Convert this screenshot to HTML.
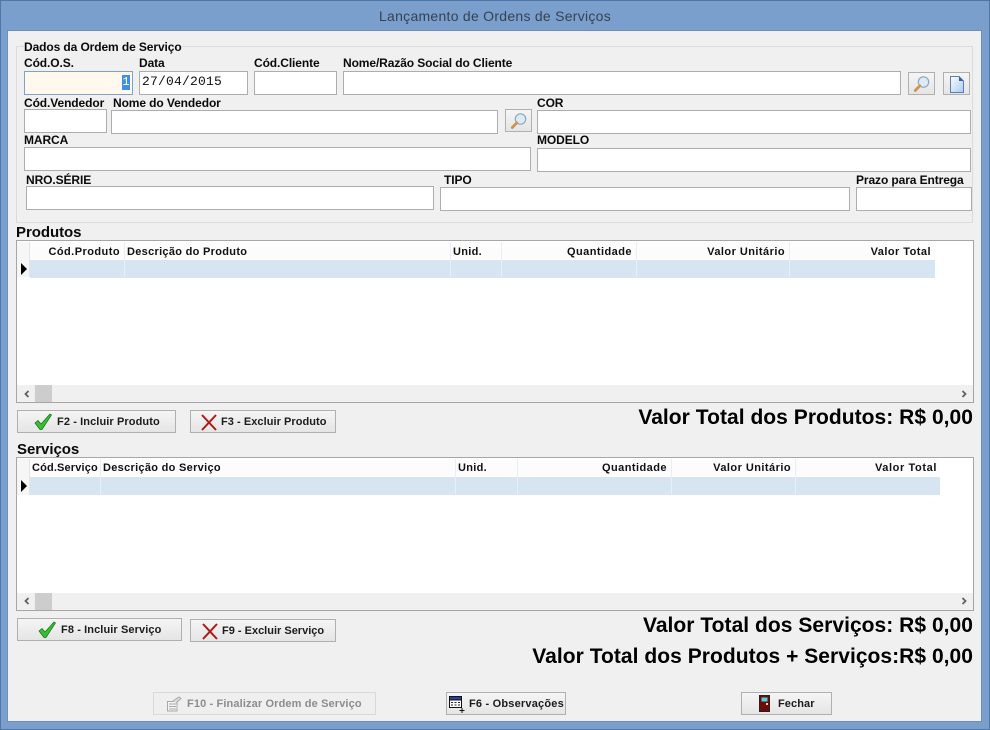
<!DOCTYPE html>
<html><head><meta charset="utf-8"><title>Lançamento de Ordens de Serviços</title>
<style>
html,body{margin:0;padding:0;background:#7a9fcd;}
#w{position:relative;width:990px;height:730px;overflow:hidden;background:#7a9fcd;font-family:"Liberation Sans",sans-serif;color:#000;}
#w *{position:absolute;box-sizing:border-box;}
.o{left:0;top:0;width:990px;height:730px;border:1px solid #4e77a6;}
.c{left:7px;top:30px;width:975px;height:692px;background:#f0f0f0;border:1px solid #6b90bf;}
.t{left:0;width:990px;top:7px;text-align:center;font-size:14px;letter-spacing:.27px;line-height:18px;color:#37414f;}
.g{left:16px;top:46px;width:957px;height:177px;border:1px solid #dcdcdc;}
.l{font-size:12px;font-weight:bold;line-height:14px;white-space:nowrap;color:#0a0a0a;letter-spacing:-.1px;}
.i{background:#fff;border:1px solid #adadad;}
.b{background:linear-gradient(#f5f5f5,#e5e5e5);border:1px solid #b0b0b0;}
.bt{font-size:11px;font-weight:bold;line-height:14px;white-space:nowrap;letter-spacing:.08px;color:#1c1c1c;}
.grid{left:16px;width:958px;background:#fff;border:1px solid #a6a6a6;}
.hd{font-family:"Liberation Sans",sans-serif;font-size:11px;font-weight:bold;line-height:14px;white-space:nowrap;letter-spacing:.3px;color:#111;}
.r{text-align:right;letter-spacing:.45px;}
.tot{right:17px;font-size:21px;font-weight:bold;line-height:24px;white-space:nowrap;color:#000;text-align:right;letter-spacing:.04px;}
.h2{font-size:15px;font-weight:bold;line-height:16px;color:#0a0a0a;letter-spacing:-.05px;}
</style></head><body><div id="w">
<div class="o"></div>
<div class="t">Lançamento de Ordens de Serviços</div>
<div class="c"></div>
<div class="g"></div>
<div class="l" style="left:24px;top:40px;background:#f0f0f0;">Dados da Ordem de Serviço</div>

<div class="l" style="left:24px;top:56px">Cód.O.S.</div>
<div class="l" style="left:139px;top:56px">Data</div>
<div class="l" style="left:254px;top:56px">Cód.Cliente</div>
<div class="l" style="left:343px;top:56px">Nome/Razão Social do Cliente</div>

<div class="i" style="left:24px;top:71px;width:109px;height:24px;border-color:#7da2ce;background:#fff8ec"></div>
<div style="left:122px;top:75px;width:8px;height:15px;background:#3f8fe6;color:#fff;font:12px/15px 'Liberation Mono',monospace;text-align:center">1</div>
<div class="i" style="left:139px;top:71px;width:109px;height:24px;"></div>
<div style="left:142px;top:74px;font:13px/16px 'Liberation Mono',monospace;color:#111;letter-spacing:.2px;white-space:nowrap">27/04/2015</div>
<div class="i" style="left:254px;top:71px;width:83px;height:24px"></div>
<div class="i" style="left:343px;top:71px;width:558px;height:24px"></div>

<div class="b" style="left:908px;top:72px;width:27px;height:23px"></div>
<svg style="left:913px;top:75px" width="18" height="18" viewBox="0 0 18 18"><circle cx="10.500" cy="7" r="5.200" fill="#dcebf6" stroke="#8aa9c0" stroke-width="1.200"/><path d="M6.800 10.800L2.300 15.500" stroke="#cf9350" stroke-width="2.800" stroke-linecap="round"/></svg>
<div class="b" style="left:943px;top:72px;width:27px;height:23px"></div>
<svg style="left:950px;top:76px" width="15" height="17" viewBox="0 0 15 17"><defs><linearGradient id="d" x1="0" y1="0" x2="1" y2="1"><stop offset="0" stop-color="#fff"/><stop offset="1" stop-color="#a9c9ee"/></linearGradient></defs><path d="M.5.5H9L13.5 5V16.5H.5Z" fill="url(#d)" stroke="#5a7fb5"/><path d="M9 .5V5H13.5Z" fill="#3b5f9c"/></svg>

<div class="l" style="left:24px;top:96px">Cód.Vendedor</div>
<div class="l" style="left:113px;top:96px">Nome do Vendedor</div>
<div class="l" style="left:537px;top:96px">COR</div>
<div class="i" style="left:24px;top:109px;width:83px;height:24px"></div>
<div class="i" style="left:111px;top:110px;width:387px;height:24px"></div>
<div class="b" style="left:505px;top:109px;width:27px;height:23px"></div>
<svg style="left:510px;top:112px" width="18" height="18" viewBox="0 0 18 18"><circle cx="10.500" cy="7" r="5.200" fill="#dcebf6" stroke="#8aa9c0" stroke-width="1.200"/><path d="M6.800 10.800L2.300 15.500" stroke="#cf9350" stroke-width="2.800" stroke-linecap="round"/></svg>
<div class="i" style="left:537px;top:110px;width:434px;height:24px"></div>

<div class="l" style="left:24px;top:133px">MARCA</div>
<div class="l" style="left:537px;top:133px">MODELO</div>
<div class="i" style="left:24px;top:147px;width:507px;height:24px"></div>
<div class="i" style="left:537px;top:148px;width:434px;height:24px"></div>

<div class="l" style="left:26px;top:173px">NRO.SÉRIE</div>
<div class="l" style="left:444px;top:173px">TIPO</div>
<div class="l" style="left:856px;top:173px">Prazo para Entrega</div>
<div class="i" style="left:26px;top:186px;width:408px;height:24px"></div>
<div class="i" style="left:440px;top:187px;width:410px;height:24px"></div>
<div class="i" style="left:856px;top:187px;width:116px;height:24px"></div>

<div class="h2" style="left:16px;top:225px">Produtos</div>
<div class="grid" style="top:240px;height:163px"></div>
<div style="left:17px;top:242px;width:918px;height:17px;background:#fcfcfc"></div>
<div style="left:30px;top:260px;width:905px;height:18px;background:#d7e4f1"></div>
<div style="left:17px;top:242px;width:13px;height:35px;background:#f6f6f6"></div>
<div style="left:29px;top:242px;width:1px;height:35px;background:#e4e4e4"></div>
<div style="left:124px;top:242px;width:1px;height:35px;background:#e8eef5"></div>
<div style="left:450px;top:242px;width:1px;height:35px;background:#e8eef5"></div>
<div style="left:501px;top:242px;width:1px;height:35px;background:#e8eef5"></div>
<div style="left:636px;top:242px;width:1px;height:35px;background:#e8eef5"></div>
<div style="left:789px;top:242px;width:1px;height:35px;background:#e8eef5"></div>
<div style="left:21px;top:263px;width:0;height:0;border-left:6px solid #000;border-top:6px solid transparent;border-bottom:6px solid transparent"></div>
<div class="hd r" style="left:30px;width:90px;top:245px">Cód.Produto</div>
<div class="hd" style="left:127px;top:245px">Descrição do Produto</div>
<div class="hd" style="left:453px;top:245px">Unid.</div>
<div class="hd r" style="left:502px;width:130px;top:245px">Quantidade</div>
<div class="hd r" style="left:637px;width:148px;top:245px">Valor Unitário</div>
<div class="hd r" style="left:790px;width:141px;top:245px">Valor Total</div>
<div style="left:17px;top:385px;width:956px;height:17px;background:#f0f0f0"></div>
<div style="left:35px;top:385px;width:17px;height:17px;background:#cdcdcd"></div>
<svg style="left:23px;top:390px" width="8" height="8" viewBox="0 0 8 8"><path d="M5.5 1L2.5 4L5.5 7" fill="none" stroke="#606060" stroke-width="1.8"/></svg>
<svg style="left:960px;top:390px" width="8" height="8" viewBox="0 0 8 8"><path d="M2.5 1L5.5 4L2.5 7" fill="none" stroke="#606060" stroke-width="1.8"/></svg>

<div class="b" style="left:17px;top:410px;width:159px;height:23px"></div>
<svg style="left:34px;top:413px" width="18" height="17" viewBox="0 0 18 17"><path d="M1 10L4 7.500L7 11L16 1L17.500 2L8 16.500H6Z" fill="#35c035" stroke="#1a6b1a" stroke-width=".7"/></svg>
<div class="bt" style="left:57px;top:415px;letter-spacing:.1px">F2 - Incluir Produto</div>
<div class="b" style="left:190px;top:410px;width:146px;height:23px"></div>
<svg style="left:200px;top:414px" width="18" height="17" viewBox="0 0 18 17"><path d="M2 1L16 16M16 1L2 16" stroke="#b01818" stroke-width="2"/></svg>
<div class="bt" style="left:221px;top:415px;letter-spacing:.05px">F3 - Excluir Produto</div>
<div class="tot" style="top:406px">Valor Total dos Produtos: R$ 0,00</div>

<div class="h2" style="left:17px;top:442px">Serviços</div>
<div class="grid" style="top:457px;height:154px"></div>
<div style="left:17px;top:459px;width:923px;height:17px;background:#fcfcfc"></div>
<div style="left:30px;top:477px;width:910px;height:18px;background:#d7e4f1"></div>
<div style="left:17px;top:459px;width:13px;height:36px;background:#f6f6f6"></div>
<div style="left:29px;top:459px;width:1px;height:36px;background:#e4e4e4"></div>
<div style="left:100px;top:459px;width:1px;height:36px;background:#e8eef5"></div>
<div style="left:455px;top:459px;width:1px;height:36px;background:#e8eef5"></div>
<div style="left:517px;top:459px;width:1px;height:36px;background:#e8eef5"></div>
<div style="left:671px;top:459px;width:1px;height:36px;background:#e8eef5"></div>
<div style="left:795px;top:459px;width:1px;height:36px;background:#e8eef5"></div>
<div style="left:21px;top:480px;width:0;height:0;border-left:6px solid #000;border-top:6px solid transparent;border-bottom:6px solid transparent"></div>
<div class="hd" style="left:32px;top:461px;letter-spacing:.15px">Cód.Serviço</div>
<div class="hd" style="left:103px;top:461px">Descrição do Serviço</div>
<div class="hd" style="left:458px;top:461px">Unid.</div>
<div class="hd r" style="left:518px;width:149px;top:461px">Quantidade</div>
<div class="hd r" style="left:672px;width:119px;top:461px">Valor Unitário</div>
<div class="hd r" style="left:796px;width:141px;top:461px;letter-spacing:.6px">Valor Total</div>
<div style="left:17px;top:593px;width:956px;height:17px;background:#f0f0f0"></div>
<div style="left:35px;top:593px;width:17px;height:17px;background:#cdcdcd"></div>
<svg style="left:23px;top:597px" width="8" height="8" viewBox="0 0 8 8"><path d="M5.5 1L2.5 4L5.5 7" fill="none" stroke="#606060" stroke-width="1.8"/></svg>
<svg style="left:960px;top:597px" width="8" height="8" viewBox="0 0 8 8"><path d="M2.5 1L5.5 4L2.5 7" fill="none" stroke="#606060" stroke-width="1.8"/></svg>

<div class="b" style="left:17px;top:618px;width:165px;height:23px"></div>
<svg style="left:38px;top:621px" width="18" height="17" viewBox="0 0 18 17"><path d="M1 10L4 7.500L7 11L16 1L17.500 2L8 16.500H6Z" fill="#35c035" stroke="#1a6b1a" stroke-width=".7"/></svg>
<div class="bt" style="left:61px;top:623px;letter-spacing:.1px">F8 - Incluir Serviço</div>
<div class="b" style="left:190px;top:619px;width:146px;height:23px"></div>
<svg style="left:201px;top:623px" width="18" height="17" viewBox="0 0 18 17"><path d="M2 1L16 16M16 1L2 16" stroke="#b01818" stroke-width="2"/></svg>
<div class="bt" style="left:222px;top:624px;letter-spacing:0">F9 - Excluir Serviço</div>
<div class="tot" style="top:614px">Valor Total dos Serviços: R$ 0,00</div>
<div class="tot" style="top:645px">Valor Total dos Produtos + Serviços:R$ 0,00</div>

<div class="b" style="left:153px;top:692px;width:223px;height:23px;background:#efefef;border-color:#d9d9d9"></div>
<svg style="left:166px;top:696px" width="16" height="16" viewBox="0 0 16 16"><path d="M1.5 5.5H11V15H1.5Z" fill="#f4f4f4" stroke="#a8a8a8"/><path d="M3 8H10M3 10.500H10M3 13H10" stroke="#a8a8a8"/><path d="M7 5L13 1L15 2.500L10 7" fill="#ddd" stroke="#a8a8a8"/></svg>
<div class="bt" style="left:187px;top:697px;color:#8c8c8c;letter-spacing:.13px">F10 - Finalizar Ordem de Serviço</div>

<div class="b" style="left:446px;top:692px;width:120px;height:23px"></div>
<svg style="left:448px;top:695px" width="18" height="18" viewBox="0 0 18 18"><path d="M1.500 1.500H13.500V12.500H1.500Z" fill="#fff" stroke="#111"/><path d="M1.500 1.500H13.500V5H1.500Z" fill="#2b3f9a" stroke="#111"/><path d="M3 7.500H5M6.500 7.500H8.500M10 7.500H12M3 10H5M6.500 10H8.500M10 10H12" stroke="#222"/><path d="M14 13V18M11.500 15.500H16.500" stroke="#111"/></svg>
<div class="bt" style="left:469px;top:697px;letter-spacing:.2px">F6 - Observações</div>

<div class="b" style="left:741px;top:692px;width:91px;height:23px"></div>
<svg style="left:759px;top:695px" width="11" height="17" viewBox="0 0 11 17"><rect x=".5" y=".5" width="10" height="16" fill="#6d0b0b" stroke="#222"/><rect x="2.500" y="2.500" width="6" height="4" fill="#4fd3df"/><rect x="7" y="8" width="2" height="2" fill="#f3d9a0"/></svg>
<div class="bt" style="left:778px;top:697px">Fechar</div>
</div></body></html>
